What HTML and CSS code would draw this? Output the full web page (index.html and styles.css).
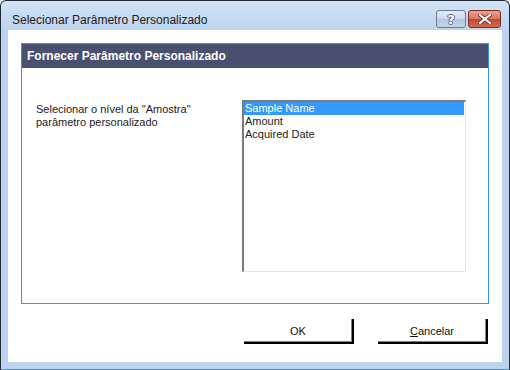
FILE: index.html
```html
<!DOCTYPE html>
<html>
<head>
<meta charset="utf-8">
<link rel="stylesheet" href="styles.css">
</head>
<body>
<div class="window">
  <div class="titlebar">
    <span class="title">Selecionar Parâmetro Personalizado</span>
    <div class="controls">
      <div class="ctl help"><span>?</span></div>
      <div class="ctl close">
        <svg width="14" height="10" viewBox="0 0 14 10"><path d="M2 1 L12 9 M12 1 L2 9" stroke="#7a2a20" stroke-width="4" stroke-linecap="square"/><path d="M2 1 L12 9 M12 1 L2 9" stroke="#fff" stroke-width="2.2" stroke-linecap="square"/></svg>
      </div>
    </div>
  </div>
  <div class="client">
    <div class="panel">
      <div class="panel-header">Fornecer Parâmetro Personalizado</div>
      <div class="panel-body">
        <div class="label">Selecionar o nível da "Amostra"<br>parâmetro personalizado</div>
        <div class="listbox">
          <div class="item selected">Sample Name</div>
          <div class="item">Amount</div>
          <div class="item">Acquired Date</div>
        </div>
      </div>
    </div>
    <div class="buttons">
      <div class="btn">OK</div>
      <div class="btn"><u>C</u>ancelar</div>
    </div>
  </div>
</div>
</body>
</html>
```
FILE: styles.css
```css
html, body { margin: 0; padding: 0; background: #fff; }
.window {
  width: 510px; height: 370px; box-sizing: border-box;
  border: 1px solid #1e2a36; border-bottom-color: #2a9fc4;
  border-radius: 6px 6px 0 0;
  background: linear-gradient(#d3e3f5 0px, #bdd3ee 30px, #bdd3ee 100%);
  display: flex; flex-direction: column;
}
.titlebar {
  height: 29px; display: flex; align-items: flex-start;
  padding-left: 11px;
}
.title {
  font-family: "Liberation Sans", Arial, sans-serif; font-size: 12px; color: #1a1a1a;
  margin-top: 12px;
}
.controls { margin-left: auto; margin-right: 8px; margin-top: 9px; display: flex; gap: 2px; }
.ctl {
  height: 18px; border: 1px solid #6b7d93; border-radius: 3px; box-sizing: border-box;
  display: flex; align-items: center; justify-content: center;
}
.help { width: 30px; background: linear-gradient(#e3ecf7 0%, #c9d9ec 50%, #b3c8e2 51%, #c5d6ea 100%); }
.help span {
  font-family: "DejaVu Sans", sans-serif; font-weight: bold; font-size: 13px; color: #fff; line-height: 1;
  text-shadow: 1px 0 0 #55677e, -1px 0 0 #55677e, 0 1px 0 #55677e, 0 -1px 0 #55677e;
}
.close { width: 33px; border-color: #7d2a22; background: linear-gradient(#e8a493 0%, #d47563 50%, #c04a35 51%, #d26a4f 100%); }
.client {
  flex: 1; margin: 0 7px 7px 7px; background: #fff;
  padding: 13px 13px 0 13px; display: flex; flex-direction: column;
}
.panel {
  height: 261px; box-sizing: border-box; border: 1px solid #3297f0;
  display: flex; flex-direction: column;
}
.panel-header {
  height: 24px; background: #4a5170; color: #fff;
  font-family: "Liberation Sans", Arial, sans-serif; font-weight: bold; font-size: 12px;
  padding-left: 5px; line-height: 25px;
}
.panel-body { display: flex; padding: 32px 0 0 14px; }
.label {
  width: 206px; font-family: "Liberation Sans", Arial, sans-serif; font-size: 11px;
  color: #222; line-height: 13px; padding-top: 3px;
}
.listbox {
  width: 224px; height: 172px; box-sizing: border-box;
  border: 2px solid #e3e3e3; border-left-color: #7a7a7a; border-top-color: #7a7a7a;
  border-right-width: 1px; border-bottom-width: 1px;
  font-family: "Liberation Sans", Arial, sans-serif; font-size: 11px; color: #222;
}
.item { height: 13px; line-height: 13px; padding-left: 1px; margin-right: 1px; }
.item.selected { background: #3399ff; color: #fff; }
.buttons { display: flex; gap: 24px; padding: 15px 0 0 223px; }
.btn {
  width: 110px; height: 25px; box-sizing: border-box;
  border-right: 2px solid #000; border-bottom: 2px solid #000;
  box-shadow: inset -1px -1px 0 #808080;
  display: flex; align-items: center; justify-content: center;
  font-family: "Liberation Sans", Arial, sans-serif; font-size: 11px; color: #111;
}
```
